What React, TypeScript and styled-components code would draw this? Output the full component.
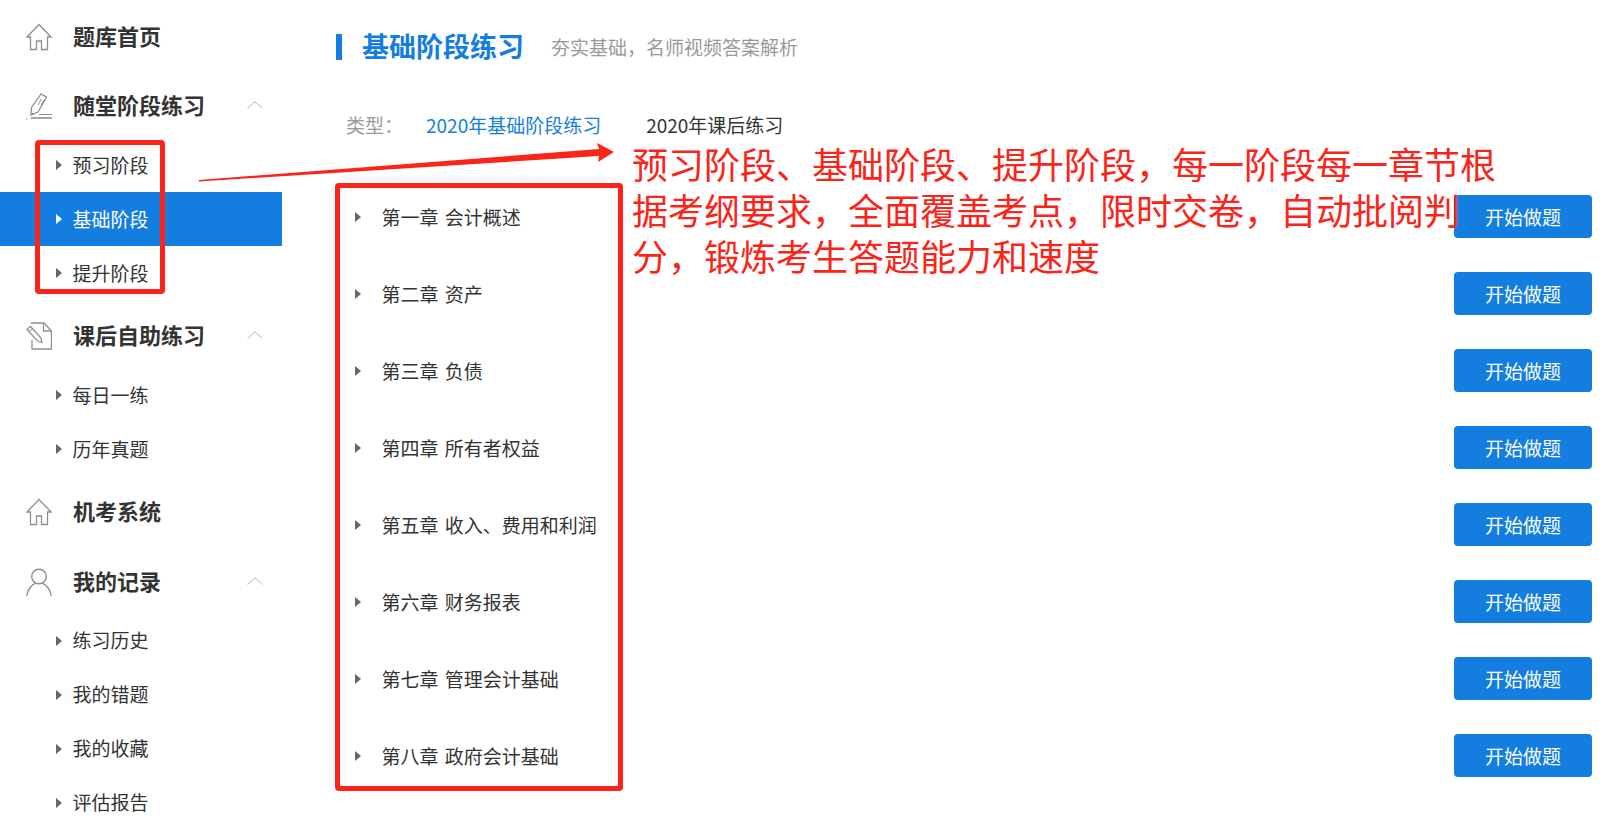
import styled, { createGlobalStyle } from "styled-components";

const BLUE = "#137ee0";
const RED = "#fb2418";

const GlobalStyle = createGlobalStyle`
  html, body {
    margin: 0;
    padding: 0;
    background: #fff;
    overflow: hidden;
    font-family: "Noto Sans CJK SC", "Noto Sans", sans-serif;
    color: #333;
  }
`;

const Page = styled.div`
  position: relative;
  display: flex;
  width: 1623px;
  height: 840px;
  overflow: hidden;
`;

const Sidebar = styled.nav`
  width: 282px;
  flex-shrink: 0;
  display: flex;
  flex-direction: column;
  padding-top: 5px;
`;

const Group = styled.div<{ $gap?: number }>`
  display: flex;
  flex-direction: column;
  margin-top: ${(p) => p.$gap ?? 0}px;
`;

const GroupHead = styled.div`
  display: flex;
  align-items: center;
  height: 64px;
  padding-left: 26px;
  font-size: 22px;
  font-weight: 700;
  color: #333;
  svg.icon {
    width: 26px;
    height: 28px;
    margin-right: 21px;
    flex-shrink: 0;
  }
`;

const HeadText = styled.span`
  flex: 1;
  padding-bottom: 4px;
`;

const Chevron = styled.svg`
  width: 16px;
  height: 8px;
  margin-right: 19px;
  margin-bottom: 2px;
`;

const SubItem = styled.div<{ $active?: boolean }>`
  display: flex;
  align-items: center;
  height: 54px;
  padding-left: 56px;
  font-size: 19px;
  background: ${(p) => (p.$active ? BLUE : "transparent")};
  color: ${(p) => (p.$active ? "#fff" : "#333")};
`;

const SubLabel = styled.span`
  padding-bottom: 2px;
`;

const Caret = styled.i<{ $light?: boolean }>`
  width: 0;
  height: 0;
  flex-shrink: 0;
  border-left: 6px solid ${(p) => (p.$light ? "#fff" : "#666")};
  border-top: 5px solid transparent;
  border-bottom: 5px solid transparent;
  margin-right: 10.5px;
`;

const Main = styled.main`
  flex: 1;
  display: flex;
  flex-direction: column;
  margin-left: 54px;
  padding-right: 31px;
`;

const TitleRow = styled.div`
  display: flex;
  align-items: center;
  height: 94px;
`;

const TitleBar = styled.span`
  width: 6px;
  height: 26px;
  background: ${BLUE};
  margin-right: 20px;
`;

const Title = styled.h1`
  margin: 0 27px 0 0;
  padding-bottom: 4px;
  font-size: 27px;
  font-weight: 700;
  color: ${BLUE};
`;

const Subtitle = styled.span`
  padding-bottom: 2px;
  font-size: 19px;
  color: #999;
`;

const TypeRow = styled.div`
  display: flex;
  align-items: center;
  box-sizing: border-box;
  height: 64px;
  padding: 0 0 4px 10px;
  font-size: 19px;
`;

const TypeLabel = styled.span`
  width: 80px;
  color: #999;
`;

const TypeTab = styled.span<{ $active?: boolean }>`
  margin-right: 45px;
  color: ${(p) => (p.$active ? BLUE : "#333")};
`;

const ChapterList = styled.div`
  display: flex;
  flex-direction: column;
  margin-top: 20px;
`;

const ChapterRow = styled.div`
  display: flex;
  align-items: center;
  justify-content: space-between;
  height: 77px;
  padding-left: 19px;
`;

const ChapterName = styled.div`
  display: flex;
  align-items: center;
  font-size: 19px;
  word-spacing: 2px;
  color: #333;
  ${Caret} {
    margin-right: 20.5px;
  }
`;

const StartButton = styled.button`
  width: 138px;
  height: 43px;
  border: 0;
  border-radius: 4px;
  background: ${BLUE};
  color: #fff;
  font-family: inherit;
  font-size: 19px;
  padding: 0;
`;

const MarkBox = styled.div<{ $x: number; $y: number; $w: number; $h: number }>`
  position: absolute;
  left: ${(p) => p.$x}px;
  top: ${(p) => p.$y}px;
  width: ${(p) => p.$w}px;
  height: ${(p) => p.$h}px;
  box-sizing: border-box;
  border: 5px solid ${RED};
  border-radius: 4px;
`;

const Arrow = styled.svg`
  position: absolute;
  left: 0;
  top: 0;
  width: 1623px;
  height: 840px;
  pointer-events: none;
`;

const Annotation = styled.p`
  position: absolute;
  left: 632px;
  top: 140px;
  width: 880px;
  margin: 0;
  font-size: 36px;
  line-height: 46px;
  color: ${RED};
`;

const HomeIcon = () => (
  <svg className="icon" viewBox="0 0 26 28" fill="none" stroke="#8f8f8f" strokeWidth="1.3">
    <path d="M1 14 L13 1.5 L25 14 L21.5 14 V26.5 H15.5 V18 H10.5 V26.5 H4.5 V14 Z" />
  </svg>
);

const PenIcon = () => (
  <svg className="icon" viewBox="0 0 26 28" fill="none" stroke="#8f8f8f" strokeWidth="1.3">
    <path d="M15 2 L20.5 5 L12 20 L5 23 L5.5 15.5 Z" />
    <path d="M6 21 L8 23 M15.5 7 L12 13 M18 8 L15 13" strokeWidth="1" />
    <path d="M5 26 H26" strokeWidth="1.6" />
    <path d="M13 22.5 H26" strokeWidth="1" />
    <path d="M0 27 H1.4" strokeWidth="1" />
  </svg>
);

const DocIcon = () => (
  <svg className="icon" viewBox="0 0 26 28" fill="none" stroke="#8f8f8f" strokeWidth="1.3">
    <path d="M5 1 H18 L25.5 9 V27 H6 V18" />
    <path d="M17.5 1.5 V9 H25" />
    <path d="M1 7.5 L4.5 4.5 L15 16 L16 20.5 L11.5 19 Z" />
    <path d="M3 9.5 L6.5 6.5" strokeWidth="1" />
  </svg>
);

const UserIcon = () => (
  <svg className="icon" viewBox="0 0 26 28" fill="none" stroke="#8f8f8f" strokeWidth="1.4">
    <circle cx="13" cy="8.5" r="7.3" />
    <path d="M0.8 28 C1.5 21 6 16.5 10 15.2 M25.2 28 C24.5 21 20 16.5 16 15.2" />
  </svg>
);

const ChevronUp = () => (
  <Chevron viewBox="0 0 16 8" fill="none" stroke="#b4b4b4" strokeWidth="1">
    <path d="M0.5 7.5 L8 0.8 L15.5 7.5" />
  </Chevron>
);

const Sub = ({ label, active }: { label: string; active?: boolean }) => (
  <SubItem $active={active}>
    <Caret $light={active} />
    <SubLabel>{label}</SubLabel>
  </SubItem>
);

const chapters = [
  "第一章 会计概述",
  "第二章 资产",
  "第三章 负债",
  "第四章 所有者权益",
  "第五章 收入、费用和利润",
  "第六章 财务报表",
  "第七章 管理会计基础",
  "第八章 政府会计基础",
];

export default function App() {
  return (
    <Page>
      <GlobalStyle />
      <Sidebar>
        <Group>
          <GroupHead>
            <HomeIcon />
            <HeadText>题库首页</HeadText>
          </GroupHead>
        </Group>
        <Group $gap={5}>
          <GroupHead>
            <PenIcon />
            <HeadText>随堂阶段练习</HeadText>
            <ChevronUp />
          </GroupHead>
          <Sub label="预习阶段" />
          <Sub label="基础阶段" active />
          <Sub label="提升阶段" />
        </Group>
        <Group $gap={4}>
          <GroupHead>
            <DocIcon />
            <HeadText>课后自助练习</HeadText>
            <ChevronUp />
          </GroupHead>
          <Sub label="每日一练" />
          <Sub label="历年真题" />
        </Group>
        <Group $gap={4}>
          <GroupHead>
            <HomeIcon />
            <HeadText>机考系统</HeadText>
          </GroupHead>
        </Group>
        <Group $gap={5.5}>
          <GroupHead>
            <UserIcon />
            <HeadText>我的记录</HeadText>
            <ChevronUp />
          </GroupHead>
          <Sub label="练习历史" />
          <Sub label="我的错题" />
          <Sub label="我的收藏" />
          <Sub label="评估报告" />
        </Group>
      </Sidebar>
      <Main>
        <TitleRow>
          <TitleBar />
          <Title>基础阶段练习</Title>
          <Subtitle>夯实基础，名师视频答案解析</Subtitle>
        </TitleRow>
        <TypeRow>
          <TypeLabel>类型：</TypeLabel>
          <TypeTab $active>2020年基础阶段练习</TypeTab>
          <TypeTab>2020年课后练习</TypeTab>
        </TypeRow>
        <ChapterList>
          {chapters.map((name) => (
            <ChapterRow key={name}>
              <ChapterName>
                <Caret />
                {name}
              </ChapterName>
              <StartButton>开始做题</StartButton>
            </ChapterRow>
          ))}
        </ChapterList>
      </Main>
      <MarkBox $x={35} $y={140} $w={130} $h={154} />
      <MarkBox $x={335} $y={183} $w={288} $h={608} />
      <Arrow viewBox="0 0 1623 840">
        <polygon points="199,180 599,149 597,143 614,152 598,162 599,156 199,181.5" fill={RED} />
      </Arrow>
      <Annotation>
        预习阶段、基础阶段、提升阶段，每一阶段每一章节根
        <br />
        据考纲要求，全面覆盖考点，限时交卷，自动批阅判
        <br />
        分，锻炼考生答题能力和速度
      </Annotation>
    </Page>
  );
}
